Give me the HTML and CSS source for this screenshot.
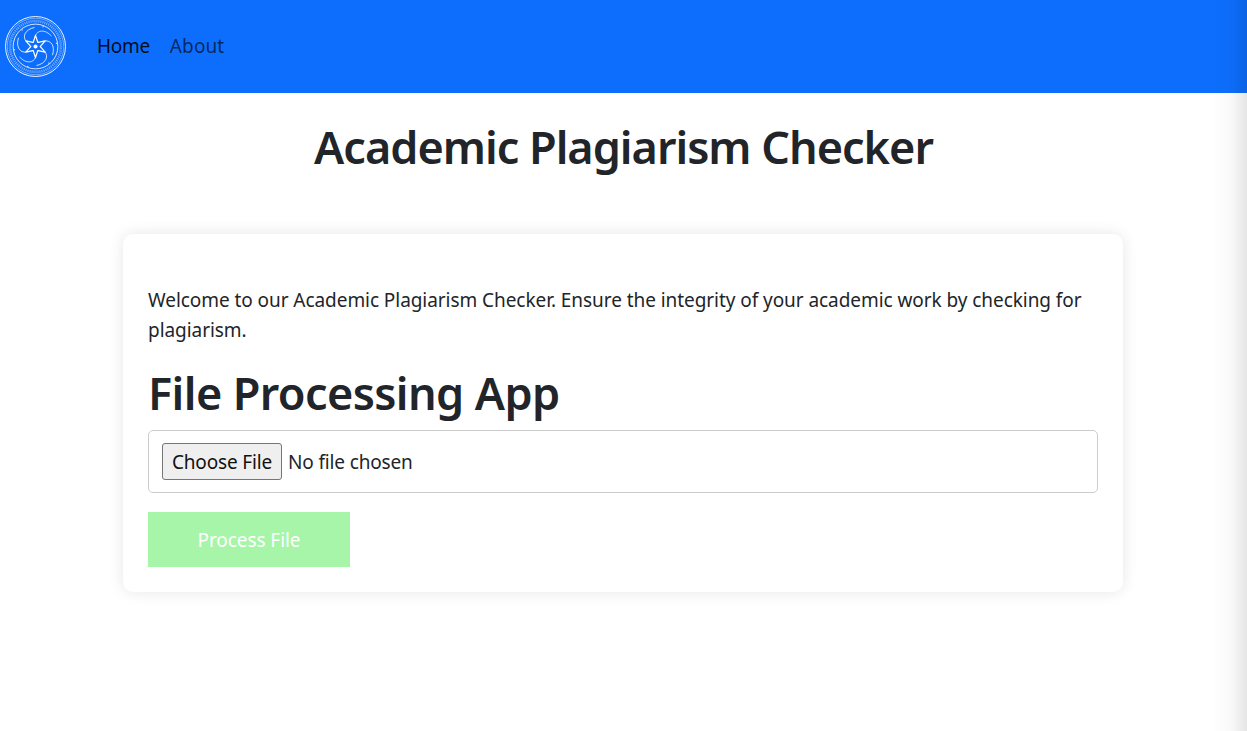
FILE: index.html
```html
<!DOCTYPE html>
<html>
  <head>
    <meta charset="UTF-8">
    <title>Academic Plagiarism Checker</title>
    <link rel="stylesheet" href="styles.css">
  </head>
  <body>
    <nav class="navbar">
      <svg class="logo" viewBox="0 0 60 60" fill="none" stroke="#fff">
        <circle cx="30" cy="30" r="29.5" stroke-width="0.9"/>
        <circle cx="30" cy="30" r="27.8" stroke-width="0.4"/>
        <circle cx="30" cy="30" r="25" stroke-width="2.6" stroke-dasharray="1 1" opacity="0.45"/>
        <circle cx="30" cy="30" r="22" stroke-width="0.8"/>
        <g stroke-linecap="round" stroke-linejoin="round">
          <g id="arm">
            <path d="M27.8 25.8 L30 19 L32.2 25.8" stroke-width="1.2"/>
            <path d="M30 19 C32 14 39 12.5 45.5 19.5" stroke-width="0.7"/>
            <circle cx="37.5" cy="10.5" r="0.6" fill="#fff" stroke="none"/>
          </g>
          <use href="#arm" transform="rotate(60 30 30)"/>
          <use href="#arm" transform="rotate(120 30 30)"/>
          <use href="#arm" transform="rotate(180 30 30)"/>
          <use href="#arm" transform="rotate(240 30 30)"/>
          <use href="#arm" transform="rotate(300 30 30)"/>
        </g>
        <circle cx="30" cy="30" r="2" fill="#fff" stroke="none"/>
      </svg>
      <ul class="nav-links">
        <li><a class="nav-link active" href="#">Home</a></li>
        <li><a class="nav-link" href="#">About</a></li>
      </ul>
    </nav>
    <main class="page">
      <h1 class="page-title">Academic Plagiarism Checker</h1>
      <section class="card">
        <p class="intro">Welcome to our Academic Plagiarism Checker. Ensure the integrity of your academic work by checking for plagiarism.</p>
        <h2 class="app-title">File Processing App</h2>
        <form>
          <input class="file-input" type="file">
          <button class="process-btn" type="button">Process File</button>
        </form>
      </section>
    </main>
  </body>
</html>
```

FILE: styles.css
```css
html {
  font-family: "Noto Sans", "Open Sans", sans-serif;
}
body {
  position: relative;
  margin: 0;
  color: #212529;
  background: #fff;
  overflow: hidden;
  height: 731px;
  display: flex;
  flex-direction: column;
}
/* soft shade down the right edge, over navbar and page */
body::after {
  content: "";
  position: absolute;
  top: 0;
  right: 0;
  bottom: 0;
  width: 36px;
  pointer-events: none;
  background: linear-gradient(to right, rgba(0, 0, 0, 0), rgba(0, 0, 0, 0.025) 55%, rgba(0, 0, 0, 0.1));
}
.navbar {
  height: 93px;
  flex: none;
  background: #0d6efd;
  display: flex;
  align-items: center;
  padding-left: 5px;
}
.logo {
  width: 61px;
  height: 61px;
  margin-right: 31px;
}
.nav-links {
  display: flex;
  gap: 20px;
  list-style: none;
  margin: 0;
  padding: 0 0 2px;
}
.nav-link {
  font-size: 19px;
  letter-spacing: 0.1px;
  text-decoration: none;
  color: rgba(0, 0, 0, 0.65);
}
.nav-link.active {
  letter-spacing: -0.3px;
  color: rgba(0, 0, 0, 0.9);
}
.page {
  flex: 1;
  padding-top: 24px;
}
.page-title {
  margin: 0 0 57px;
  text-align: center;
  font-size: 45px;
  line-height: 60px;
  font-weight: 600;
  letter-spacing: -1px;
}
.card {
  width: 1000px;
  box-sizing: border-box;
  margin-left: 123px;
  padding: 51px 25px 25px;
  background: #fff;
  border-radius: 10px;
  box-shadow: 0 0 15px rgba(0, 0, 0, 0.1);
}
.intro {
  margin: 0 0 19px;
  font-size: 19px;
  line-height: 30px;
  letter-spacing: -0.06px;
}
.app-title {
  margin: 0 0 8px;
  font-size: 45px;
  line-height: 58px;
  font-weight: 600;
  letter-spacing: -0.6px;
}
.file-input {
  display: block;
  width: 100%;
  box-sizing: border-box;
  height: 63px;
  padding: 12px 13px;
  border: 1px solid #ccc;
  border-radius: 5px;
  font-family: inherit;
  font-size: 19px;
  letter-spacing: -0.15px;
  color: #212529;
  margin-bottom: 19px;
}
.file-input::file-selector-button {
  height: 37px;
  width: 120px;
  padding: 0;
  margin-right: 6px;
  font: inherit;
  letter-spacing: inherit;
  color: #111;
  background: #efefef;
  border: 1px solid #767676;
  border-radius: 3px;
}
.process-btn {
  display: block;
  width: 202px;
  height: 55px;
  border: 0;
  background: #a6f5a9;
  color: #fff;
  font-family: inherit;
  font-size: 19px;
  letter-spacing: -0.08px;
}
```
